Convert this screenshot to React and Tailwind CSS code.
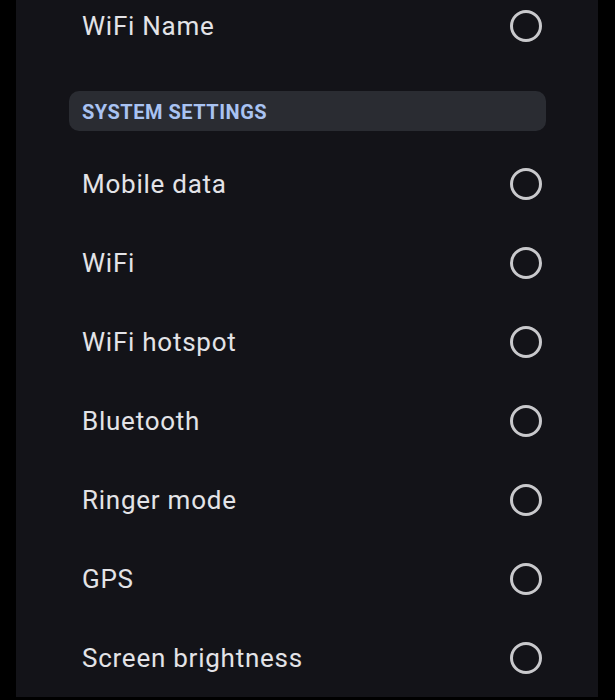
export default function App() {
  const rows = [
    "Mobile data",
    "WiFi",
    "WiFi hotspot",
    "Bluetooth",
    "Ringer mode",
    "GPS",
    "Screen brightness",
  ];
  const Circle = () => (
    <div className="w-[32px] h-[32px] rounded-full border-[3px] border-[#c9c9cc] shrink-0" />
  );
  return (
    <div className="w-[615px] h-[700px] bg-black flex" style={{ fontFamily: "Roboto, 'Noto Sans', sans-serif" }}>
      <div className="ml-[16px] w-[582px] h-[697px] bg-[#131318] flex flex-col overflow-hidden">
        <div className="h-[52px] flex items-center justify-between pl-[66px] pr-[56px]">
          <span className="text-[26px] leading-none pt-[1px] text-[#e3e3e7] tracking-[0.75px]">WiFi Name</span>
          <Circle />
        </div>
        <div className="mt-[40px] ml-[53px] w-[477px] h-[40px] rounded-[10px] bg-[#2a2c32] flex items-center pl-[13px]">
          <span className="text-[20px] leading-none pt-[1px] font-bold text-[#a9c3f2] tracking-[0.5px]">SYSTEM SETTINGS</span>
        </div>
        <div className="mt-[13px] flex flex-col">
          {rows.map((r) => (
            <div key={r} className="h-[79px] flex items-center justify-between pl-[66px] pr-[56px]">
              <span className="text-[26px] leading-none pt-[1px] text-[#e3e3e7] tracking-[0.75px]">{r}</span>
              <Circle />
            </div>
          ))}
        </div>
      </div>
    </div>
  );
}
